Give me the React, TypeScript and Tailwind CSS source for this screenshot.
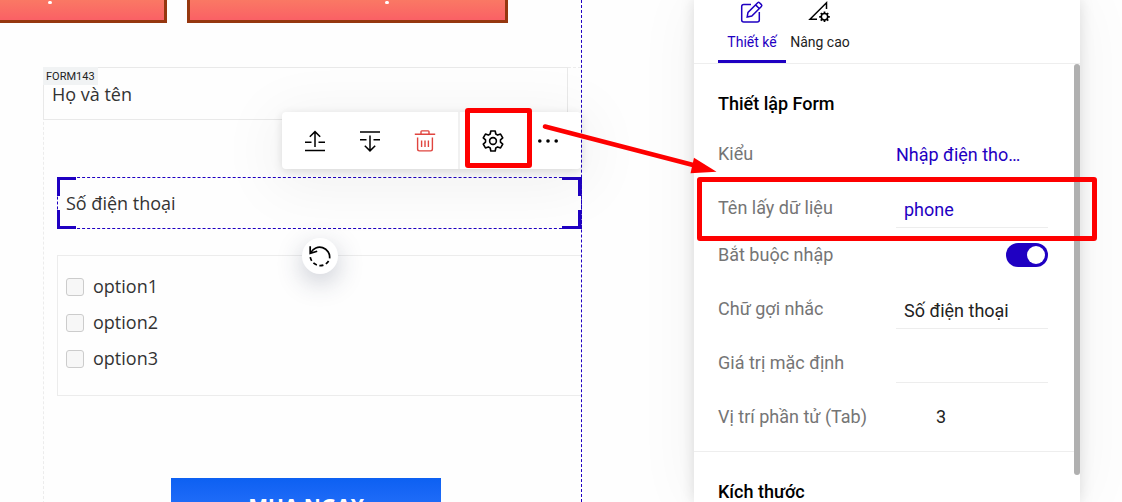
import type { ReactNode } from "react";

function MoveUpIcon() {
  return (
    <svg width="24" height="24" viewBox="0 0 24 24" fill="none" stroke="black" strokeWidth="1.5">
      <path d="M2 21.5h20M2 13.2h6.5M15.5 13.2H22M12 18V3M6.8 7.8 12 2.6l5.2 5.2" />
    </svg>
  );
}

function MoveDownIcon() {
  return (
    <svg width="24" height="24" viewBox="0 0 24 24" fill="none" stroke="black" strokeWidth="1.5">
      <path d="M2 3h20M2 10.8h6.5M15.5 10.8H22M12 6.5v15M6.8 16.7l5.2 5.2 5.2-5.2" />
    </svg>
  );
}

function TrashIcon() {
  return (
    <svg width="24" height="24" viewBox="0 0 24 24" fill="none" stroke="#e0453f" strokeWidth="1.4">
      <path d="M1.8 5.3h20.4M8 5V2.7c0-.5.3-.8.8-.8h6.4c.5 0 .8.3.8.8V5M4.6 8.5v11.6c0 1.1.7 1.8 1.8 1.8h11.2c1.1 0 1.8-.7 1.8-1.8V8.5M8.6 11.5v6.5M12 11.5v6.5M15.4 11.5v6.5" />
    </svg>
  );
}

function GearIcon() {
  return (
    <svg width="24" height="24" viewBox="-12 -12 24 24" fill="none" stroke="black" strokeWidth="1.6" strokeLinejoin="round">
      <path d="M-2.8-7-2.2-10H2.2L2.8-7 4.66-5.92 7.56-6.9 9.76-3.1 7.46-1.08V1.08L9.76 3.1 7.56 6.9 4.66 5.92 2.8 7 2.2 10H-2.2L-2.8 7-4.66 5.92-7.56 6.9-9.76 3.1-7.46 1.08V-1.08L-9.76-3.1-7.56-6.9-4.66-5.92z" />
      <circle r="3.4" />
    </svg>
  );
}

function DotsIcon() {
  return (
    <svg width="24" height="24" viewBox="0 0 24 24" fill="black">
      <circle cx="3.8" cy="12" r="1.8" />
      <circle cx="12" cy="12" r="1.8" />
      <circle cx="20.2" cy="12" r="1.8" />
    </svg>
  );
}

function ResetIcon() {
  return (
    <svg width="24" height="24" viewBox="0 0 24 24" fill="none" stroke="black" strokeWidth="1.7">
      <path d="M2.8 8.6A10 10 0 0 1 21.6 14.4" />
      <path d="M20.6 17A10 10 0 0 1 2.2 12.4" strokeDasharray="4 2.6" />
      <path d="M2.2 2.2v7.2l7-2.2" />
    </svg>
  );
}

function EditIcon() {
  return (
    <svg width="24" height="24" viewBox="0 0 24 24" fill="none" stroke="#1f00c2" strokeWidth="1.5">
      <path d="M11 4.4H3.800C2.500 4.400 1.700 5.200 1.700 6.400V20C1.700 21.200 2.500 22 3.800 22H17.200C18.500 22 19.300 21.200 19.300 20V12" />
      <path d="M7.200 17 8 12.400 17.700 2.700A1.300 1.300 0 0 1 19.500 2.700L21.400 4.600A1.300 1.300 0 0 1 21.400 6.400L11.800 16.100ZM15.600 4.900 19.200 8.500" />
    </svg>
  );
}

function AdvancedIcon() {
  return (
    <svg width="24" height="24" viewBox="0 0 24 24" fill="none" stroke="black" strokeWidth="1.5">
      <path d="M9 19.300H2L18.500 2.800V9" />
      <circle cx="16.500" cy="16.800" r="3.200" />
      <path
        strokeWidth="1.700"
        d="M16.500 11.500v2M16.500 20.100v2M11.200 16.800h2M19.800 16.800h2M12.750 13.050l1.400 1.400M18.850 19.150l1.400 1.400M12.750 20.550l1.400-1.400M18.850 14.450l1.400-1.400"
      />
    </svg>
  );
}

function ToolButton({ label, children }: { label: string; children: ReactNode }) {
  return (
    <button type="button" aria-label={label} className="flex h-full w-[55px] items-center justify-center">
      {children}
    </button>
  );
}

function Row({ id, label, children }: { id: string; label: string; children?: ReactNode }) {
  return (
    <div className="flex h-[54px] items-center justify-between">
      <label htmlFor={id} className="whitespace-nowrap text-[#757575]">
        {label}
      </label>
      <div className="w-[152px]">{children}</div>
    </div>
  );
}

function PromoButton({ label, className }: { label: string; className: string }) {
  return (
    <button
      aria-label={label}
      className={
        "flex h-[23px] justify-center border-x-[3px] border-b-[3px] border-[#96370f] bg-linear-to-b from-[#fa7864] to-[#fa6065] " +
        className
      }
    >
      <span className="mt-px h-[3px] w-1 rounded-full bg-white" />
    </button>
  );
}

function Canvas() {
  const options = ["option1", "option2", "option3"];
  return (
    <main className="mr-[112px] min-w-0 flex-1 border-r border-dashed border-[#1f00c2] font-['Open_Sans','Noto_Sans',sans-serif] text-[18px] leading-6 text-[#333]">
      <div className="flex gap-5 pr-[73px]">
        <PromoButton label="Left offer" className="w-[167px] border-l-0 pr-[64px]" />
        <PromoButton label="Right offer" className="flex-1 pl-[79px]" />
      </div>

      <form className="relative mt-11 ml-[43px] border-t border-l border-dashed border-[#ececec]">
        <div className="relative -mt-px mr-[13px] -ml-px h-[53px] border border-[#e9e9e9]">
          <span className="absolute -top-px -left-px h-[18px] bg-[#f1f3f4] px-[3px] font-['Roboto',sans-serif] text-[11px] leading-[19px] text-[#222]">
            FORM143
          </span>
          <input
            aria-label="Họ và tên"
            placeholder="Họ và tên"
            className="h-full w-full bg-transparent px-2 outline-none placeholder:text-[#333]"
          />
        </div>

        <div className="relative mt-[57px] -mr-px ml-[13px] h-[52px] border border-dashed border-[#1f00c2]">
          <span className="absolute -top-px -left-px h-[19px] w-[19px] border-t-[3px] border-l-[3px] border-[#1f00c2]" />
          <span className="absolute -bottom-px -left-px h-[19px] w-[19px] border-b-[3px] border-l-[3px] border-[#1f00c2]" />
          <span className="absolute -top-px right-0 h-[19px] w-[19px] border-t-[3px] border-r-[3px] border-[#1f00c2]" />
          <span className="absolute right-0 -bottom-px h-[19px] w-[19px] border-r-[3px] border-b-[3px] border-[#1f00c2]" />
          <input
            aria-label="Số điện thoại"
            placeholder="Số điện thoại"
            className="h-full w-full bg-transparent px-2 outline-none placeholder:text-[#333]"
          />
          <div className="absolute right-0 bottom-[59px] flex h-[57px] items-center rounded bg-white pr-1.5 pl-[5px] shadow-[0_2px_10px_rgba(0,0,0,0.12),0_10px_60px_10px_rgba(0,0,0,0.05)]">
            <ToolButton label="Lên trên"><MoveUpIcon /></ToolButton>
            <ToolButton label="Xuống dưới"><MoveDownIcon /></ToolButton>
            <ToolButton label="Xóa"><TrashIcon /></ToolButton>
            <span className="mr-[5px] ml-1.5 h-full w-0.5 bg-[#f1f1f1]" />
            <div className="relative h-full">
              <ToolButton label="Cài đặt"><GearIcon /></ToolButton>
              <span className="pointer-events-none absolute -top-1 left-0 h-[60px] w-[67px] rounded-[3px] border-[5px] border-[#fe0000]" />
            </div>
            <ToolButton label="Thêm"><DotsIcon /></ToolButton>
          </div>
          <button
            type="button"
            aria-label="Đặt lại"
            className="absolute -bottom-[46px] left-1/2 z-10 flex h-9 w-9 -translate-x-1/2 items-center justify-center rounded-full bg-white shadow-[0_8px_26px_rgba(40,50,80,0.26)]"
          >
            <ResetIcon />
          </button>
        </div>

        <fieldset className="mt-[26px] ml-[13px] flex flex-col gap-3 border border-r-0 border-[#ececec] pt-[19px] pb-6 pl-2">
          {options.map((name) => (
            <label key={name} className="flex h-6 items-center gap-[9px]">
              <input
                type="checkbox"
                className="h-[18px] w-[18px] appearance-none rounded-[3px] border border-[#ccc] bg-[#f7f7f7]"
              />
              <span className="-mt-0.5">{name}</span>
            </label>
          ))}
        </fieldset>

        <button
          type="button"
          className="mt-[82px] ml-[127px] h-14 w-[270px] bg-linear-to-b from-[#0c60f2] to-[#3079ff] text-[21px] font-bold text-white"
        >
          MUA NGAY
        </button>
      </form>
    </main>
  );
}

function SettingsPanel() {
  const field = "h-10 w-full border-b border-[#ededed] bg-transparent px-2 pt-1 outline-none";
  return (
    <aside className="relative mr-[42px] w-[386px] shrink-0 bg-white font-['Roboto',sans-serif] text-[18px] leading-6 text-[#222] shadow-[0_0_14px_rgba(0,0,0,0.13),0_0_60px_rgba(0,0,0,0.05)]">
      <nav className="flex h-16 border-b border-[#eee] px-6 text-[14px] leading-5">
        <button className="flex w-[68px] flex-col items-center justify-between whitespace-nowrap border-b-[3px] border-[#1f00c2] pb-2 text-[#1f00c2]">
          <EditIcon />
          Thiết kế
        </button>
        <button className="flex w-[68px] flex-col items-center justify-between whitespace-nowrap border-b-[3px] border-transparent pb-2">
          <AdvancedIcon />
          Nâng cao
        </button>
      </nav>

      <section className="border-b border-[#eee] pt-7 pr-8 pb-[7px] pl-6">
        <h2 className="pb-[11px] font-medium text-black">Thiết lập Form</h2>
        <Row id="kind" label="Kiểu">
          <select id="kind" className="w-[126px] appearance-none truncate bg-transparent pt-0.5 text-[#1f00c2] outline-none">
            <option>Nhập điện thoại</option>
          </select>
        </Row>
        <div className="relative">
          <Row id="name" label="Tên lấy dữ liệu">
            <input id="name" defaultValue="phone" className={field + " text-[#1f00c2]"} />
          </Row>
          <span className="pointer-events-none absolute -top-1 -right-[49px] -left-[21px] z-10 h-16 rounded-[3px] border-[5px] border-[#fe0000]" />
        </div>
        <div className="mb-[7px] flex h-10 items-center justify-between">
          <label htmlFor="required" className="text-[#757575]">
            Bắt buộc nhập
          </label>
          <span className="relative flex h-6 w-[42px]">
            <input
              id="required"
              type="checkbox"
              role="switch"
              defaultChecked
              className="peer h-6 w-[42px] appearance-none rounded-full bg-[#ccc] checked:bg-[#1f00c2]"
            />
            <span className="pointer-events-none absolute top-[3px] left-[3px] h-[18px] w-[18px] rounded-full bg-white peer-checked:left-[21px]" />
          </span>
        </div>
        <Row id="placeholder" label="Chữ gợi nhắc">
          <input id="placeholder" defaultValue="Số điện thoại" className={field} />
        </Row>
        <Row id="default" label="Giá trị mặc định">
          <input id="default" className={field} />
        </Row>
        <Row id="tab" label="Vị trí phần tử (Tab)">
          <input id="tab" defaultValue="3" className="w-full bg-transparent pl-10 outline-none" />
        </Row>
      </section>

      <section className="px-6 pt-7">
        <h2 className="font-medium text-black">Kích thước</h2>
      </section>

      <span className="absolute top-16 right-0 h-[411px] w-1.5 rounded-full bg-[#b0b0b0]" />
    </aside>
  );
}

export default function App() {
  return (
    <div className="relative flex h-screen overflow-hidden bg-[#fefefe]">
      <Canvas />
      <SettingsPanel />
      <svg
        className="pointer-events-none absolute top-[120px] right-[402px] z-20"
        width="180"
        height="60"
        viewBox="540 120 180 60"
        aria-hidden="true"
      >
        <path d="M545 126.500 696 165.800" stroke="#fe0000" strokeWidth="4.600" strokeLinecap="round" />
        <path d="M694 157.800 716.500 171.700 690.500 173.200z" fill="#fe0000" />
      </svg>
    </div>
  );
}
